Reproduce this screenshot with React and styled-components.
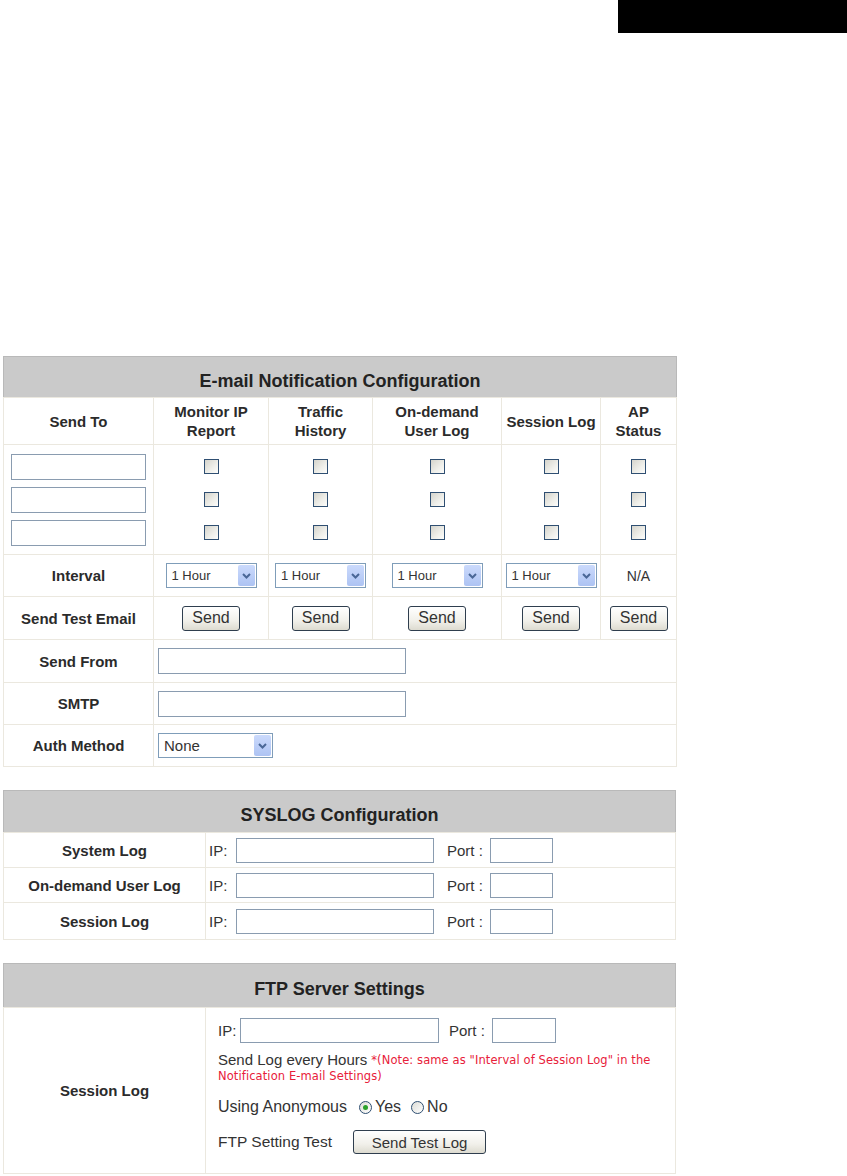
import React from 'react'
import styled, { createGlobalStyle } from 'styled-components'

const GlobalStyle = createGlobalStyle`
  body {
    margin: 0;
    background: #fff;
    font-family: "Liberation Sans", Arial, sans-serif;
    color: #2b2b2b;
  }
`

const Page = styled.div`
  width: 847px;
  min-height: 1176px;
`

const TopBar = styled.div`
  display: flex;
  justify-content: flex-end;
`

const BlackTab = styled.div`
  width: 229px;
  height: 33px;
  background: #000;
`

const Content = styled.div`
  display: flex;
  flex-direction: column;
  gap: 23px;
  padding: 323px 0 0 3px;
`

const Table = styled.table`
  width: 673px;
  border-collapse: collapse;
  table-layout: fixed;
  border: 1px solid #b9b9b9;
`

const Title = styled.th`
  height: ${p => p.$h || 41}px;
  box-sizing: border-box;
  padding: 8px 0 0;
  background: #cacaca;
  font-size: 18px;
  font-weight: bold;
  color: #222;
  text-align: center;
  vertical-align: middle;
`

const Cell = styled.td`
  height: ${p => p.$h}px;
  box-sizing: border-box;
  padding: ${p => p.$pad || '0'};
  border: 1px solid #ebe8df;
  text-align: ${p => (p.$left ? 'left' : 'center')};
  vertical-align: ${p => (p.$top ? 'top' : 'middle')};
  font-size: 14px;
  color: #333;
`

const Label = styled(Cell)`
  font-size: 15px;
  font-weight: bold;
  line-height: 19px;
  color: #2b2b2b;
`

const Stack = styled.div`
  display: flex;
  flex-direction: column;
  align-items: center;
  gap: 7px;
`

const Slot = styled.div`
  height: 26px;
  display: flex;
  align-items: center;
  justify-content: center;
`

const TextBox = styled.input.attrs({ type: 'text' })`
  display: block;
  box-sizing: border-box;
  width: ${p => p.$w}px;
  height: ${p => p.$h || 26}px;
  margin: 0;
  padding: 0 3px;
  border: 1px solid #8a9cb0;
  background: #fff;
  font: 13px "Liberation Sans", Arial, sans-serif;
`

const CheckBox = styled.input.attrs({ type: 'checkbox' })`
  appearance: none;
  display: block;
  width: 15px;
  height: 15px;
  margin: 0;
  border: 1px solid #2f4f72;
  background: linear-gradient(135deg, #d5d4cc 0%, #efefea 60%, #fdfdfb 100%);
`

const SelectBox = styled.div`
  display: flex;
  align-items: center;
  justify-content: space-between;
  box-sizing: border-box;
  width: ${p => p.$w}px;
  height: 25px;
  margin: ${p => (p.$left ? '0' : '0 auto')};
  padding: 0 1px 0 5px;
  border: 1px solid #7f9db9;
  background: #fff;
  font-size: ${p => p.$fs || 13}px;
  color: #333;
`

const Arrow = styled.span`
  display: flex;
  align-items: center;
  justify-content: center;
  width: 17px;
  height: 21px;
  border-radius: 2px;
  background: linear-gradient(#cbdafc, #adc3f3);
`

const Button = styled.button`
  box-sizing: border-box;
  width: ${p => p.$w || 58}px;
  height: ${p => p.$h || 25}px;
  padding: 0;
  border: 1px solid #2f3e4e;
  border-radius: 3px;
  background: linear-gradient(#ffffff, #f1f0ea 60%, #dddbd0);
  font: ${p => p.$fs || 16}px "Liberation Sans", Arial, sans-serif;
  color: #333;
`

const Line = styled.div`
  display: flex;
  align-items: center;
  height: ${p => p.$h || 25}px;
  margin-top: ${p => p.$mt || 0}px;
  font-size: ${p => p.$fs || 15}px;
  color: #333;
  white-space: nowrap;
`

const Caption = styled.span`
  display: inline-block;
  width: ${p => (p.$w ? `${p.$w}px` : 'auto')};
  margin-left: ${p => p.$ml || 0}px;
  margin-right: ${p => p.$mr || 0}px;
`

const Note = styled.span`
  margin-left: ${p => p.$ml || 0}px;
  font-family: "DejaVu Sans", Verdana, sans-serif;
  font-size: 11.5px;
  letter-spacing: 0.1px;
  color: #e8203a;
`

const Radio = styled.span`
  display: inline-flex;
  align-items: center;
  justify-content: center;
  box-sizing: border-box;
  width: 13px;
  height: 13px;
  margin-left: ${p => p.$ml || 0}px;
  margin-right: 3px;
  border: 1px solid #2f4f72;
  border-radius: 50%;
  background: linear-gradient(135deg, #dcdcd6, #fff);

  &::after {
    content: '';
    width: 5px;
    height: 5px;
    border-radius: 50%;
    background: ${p => (p.$on ? '#2aa12a' : 'transparent')};
  }
`

const Chevron = () => (
  <svg width="11" height="8" viewBox="0 0 11 8">
    <path d="M2 2 L5.5 5.5 L9 2" fill="none" stroke="#4a6797" strokeWidth="2" />
  </svg>
)

const Dropdown = ({ value, w = 91, fs, left }) => (
  <SelectBox $w={w} $fs={fs} $left={left}>
    <span>{value}</span>
    <Arrow><Chevron /></Arrow>
  </SelectBox>
)

const reportCols = [
  ['Monitor IP', 'Report'],
  ['Traffic', 'History'],
  ['On-demand', 'User Log'],
  ['Session Log'],
  ['AP', 'Status'],
]

const EmailTable = () => (
  <Table>
    <colgroup>
      <col style={{ width: 150 }} />
      <col style={{ width: 115 }} />
      <col style={{ width: 104 }} />
      <col style={{ width: 129 }} />
      <col style={{ width: 99 }} />
      <col style={{ width: 76 }} />
    </colgroup>
    <thead>
      <tr><Title colSpan={6}>E-mail Notification Configuration</Title></tr>
    </thead>
    <tbody>
      <tr>
        <Label $h={47}>Send To</Label>
        {reportCols.map(lines => (
          <Label key={lines[0]} $h={47}>
            {lines.map((l, i) => <div key={i}>{l}</div>)}
          </Label>
        ))}
      </tr>
      <tr>
        <Cell $h={110}>
          <Stack>
            {[0, 1, 2].map(i => <TextBox key={i} $w={135} />)}
          </Stack>
        </Cell>
        {reportCols.map(lines => (
          <Cell key={lines[0]} $h={110}>
            <Stack>
              {[0, 1, 2].map(i => <Slot key={i}><CheckBox /></Slot>)}
            </Stack>
          </Cell>
        ))}
      </tr>
      <tr>
        <Label $h={42}>Interval</Label>
        {[0, 1, 2, 3].map(i => (
          <Cell key={i} $h={42}><Dropdown value="1 Hour" /></Cell>
        ))}
        <Cell $h={42}>N/A</Cell>
      </tr>
      <tr>
        <Label $h={43}>Send Test Email</Label>
        {[0, 1, 2, 3, 4].map(i => (
          <Cell key={i} $h={43}><Button>Send</Button></Cell>
        ))}
      </tr>
      <tr>
        <Label $h={43}>Send From</Label>
        <Cell colSpan={5} $left $pad="0 0 0 4px" $h={43}><TextBox $w={248} /></Cell>
      </tr>
      <tr>
        <Label $h={42}>SMTP</Label>
        <Cell colSpan={5} $left $pad="0 0 0 4px" $h={42}><TextBox $w={248} /></Cell>
      </tr>
      <tr>
        <Label $h={42}>Auth Method</Label>
        <Cell colSpan={5} $left $pad="0 0 0 4px" $h={42}>
          <Dropdown value="None" w={115} fs={15} left />
        </Cell>
      </tr>
    </tbody>
  </Table>
)

const IpPort = ({ ipLabel, ipW, portGap, portW }) => (
  <Line>
    <Caption $w={ipLabel}>IP:</Caption>
    <TextBox $w={ipW} $h={25} />
    <Caption $w={43} $ml={portGap}>Port :</Caption>
    <TextBox $w={portW} $h={25} />
  </Line>
)

const syslogRows = [
  ['System Log', 35],
  ['On-demand User Log', 35],
  ['Session Log', 37],
]

const SyslogTable = () => (
  <Table>
    <colgroup>
      <col style={{ width: 202 }} />
      <col />
    </colgroup>
    <thead>
      <tr><Title colSpan={2} $h={42}>SYSLOG Configuration</Title></tr>
    </thead>
    <tbody>
      {syslogRows.map(([name, h]) => (
        <tr key={name}>
          <Label $h={h}>{name}</Label>
          <Cell $left $pad="0 0 0 3px" $h={h}>
            <IpPort ipLabel={27} ipW={198} portGap={13} portW={63} />
          </Cell>
        </tr>
      ))}
    </tbody>
  </Table>
)

const FtpTable = () => (
  <Table>
    <colgroup>
      <col style={{ width: 202 }} />
      <col />
    </colgroup>
    <thead>
      <tr><Title colSpan={2} $h={44}>FTP Server Settings</Title></tr>
    </thead>
    <tbody>
      <tr>
        <Label $h={166}>Session Log</Label>
        <Cell $left $top $pad="10px 0 0 12px" $h={166}>
          <IpPort ipLabel={22} ipW={199} portGap={10} portW={64} />
          <Line $h={17} $mt={8}>
            Send Log every Hours
            <Note $ml={4}>*(Note: same as "Interval of Session Log" in the</Note>
          </Line>
          <Line $h={15}>
            <Note>Notification E-mail Settings)</Note>
          </Line>
          <Line $h={22} $mt={13} $fs={16}>
            Using Anonymous
            <Radio $on $ml={12} />Yes
            <Radio $ml={10} />No
          </Line>
          <Line $h={24} $mt={12} $fs={15.5}>
            FTP Setting Test
            <Caption $ml={21}><Button $w={133} $h={24} $fs={15}>Send Test Log</Button></Caption>
          </Line>
        </Cell>
      </tr>
    </tbody>
  </Table>
)

export default function App() {
  return (
    <Page>
      <GlobalStyle />
      <TopBar><BlackTab /></TopBar>
      <Content>
        <EmailTable />
        <SyslogTable />
        <FtpTable />
      </Content>
    </Page>
  )
}
